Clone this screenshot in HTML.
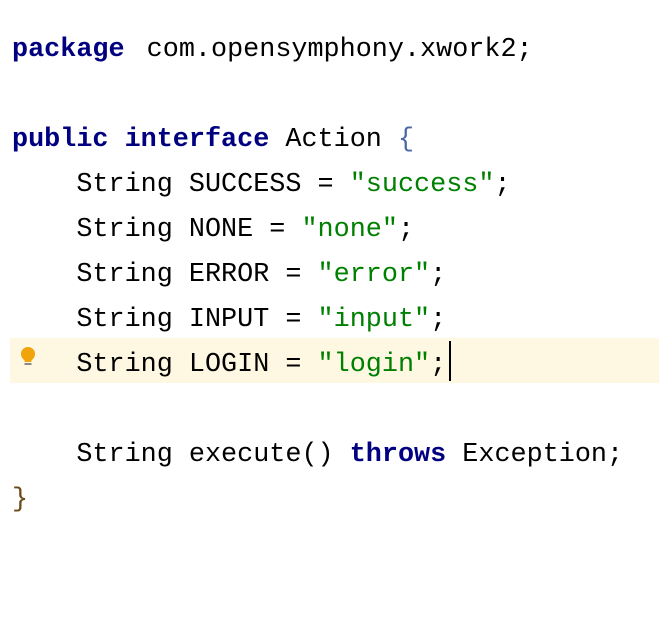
<!DOCTYPE html>
<html><head><meta charset="utf-8">
<style>
html,body{margin:0;padding:0;background:#fff;width:659px;height:642px;overflow:hidden}
.l{position:absolute;left:12px;height:45px;line-height:45px;font-family:"Liberation Mono",monospace;font-size:26.8px;color:#000;white-space:pre}
.k{color:#000080;font-weight:bold}
.s{color:#008000}
.b{color:#4a68a8}
.hl{position:absolute;left:10px;top:338px;width:649px;height:45px;background:#fef8e2}
.cur{position:absolute;left:449px;top:341px;width:2px;height:40px;background:#000}
</style></head><body>
<div class="hl"></div>
<svg style="position:absolute;left:19px;top:346px" width="18" height="24" viewBox="0 0 18 24">
<circle cx="9" cy="8" r="7" fill="#f0a30a"/>
<rect x="5.5" y="13" width="7" height="3" fill="#f0a30a"/>
<rect x="5.5" y="17" width="7" height="2" fill="#888"/>
</svg>
<div class="l" style="top:28px"><span class="k">package</span> <span style="margin-left:6px">com.opensymphony.xwork2;</span></div>
<div class="l" style="top:118px"><span class="k">public interface</span> Action <span class="b">{</span></div>
<div class="l" style="top:163px">    String SUCCESS = <span class="s">"success"</span>;</div>
<div class="l" style="top:208px">    String NONE = <span class="s">"none"</span>;</div>
<div class="l" style="top:253px">    String ERROR = <span class="s">"error"</span>;</div>
<div class="l" style="top:298px">    String INPUT = <span class="s">"input"</span>;</div>
<div class="l" style="top:343px">    String LOGIN = <span class="s">"login"</span>;</div>
<div class="cur"></div>
<div class="l" style="top:433px">    String execute() <span class="k">throws</span> Exception;</div>
<div class="l" style="top:478px;color:#6b4a1a">}</div>
</body></html>
